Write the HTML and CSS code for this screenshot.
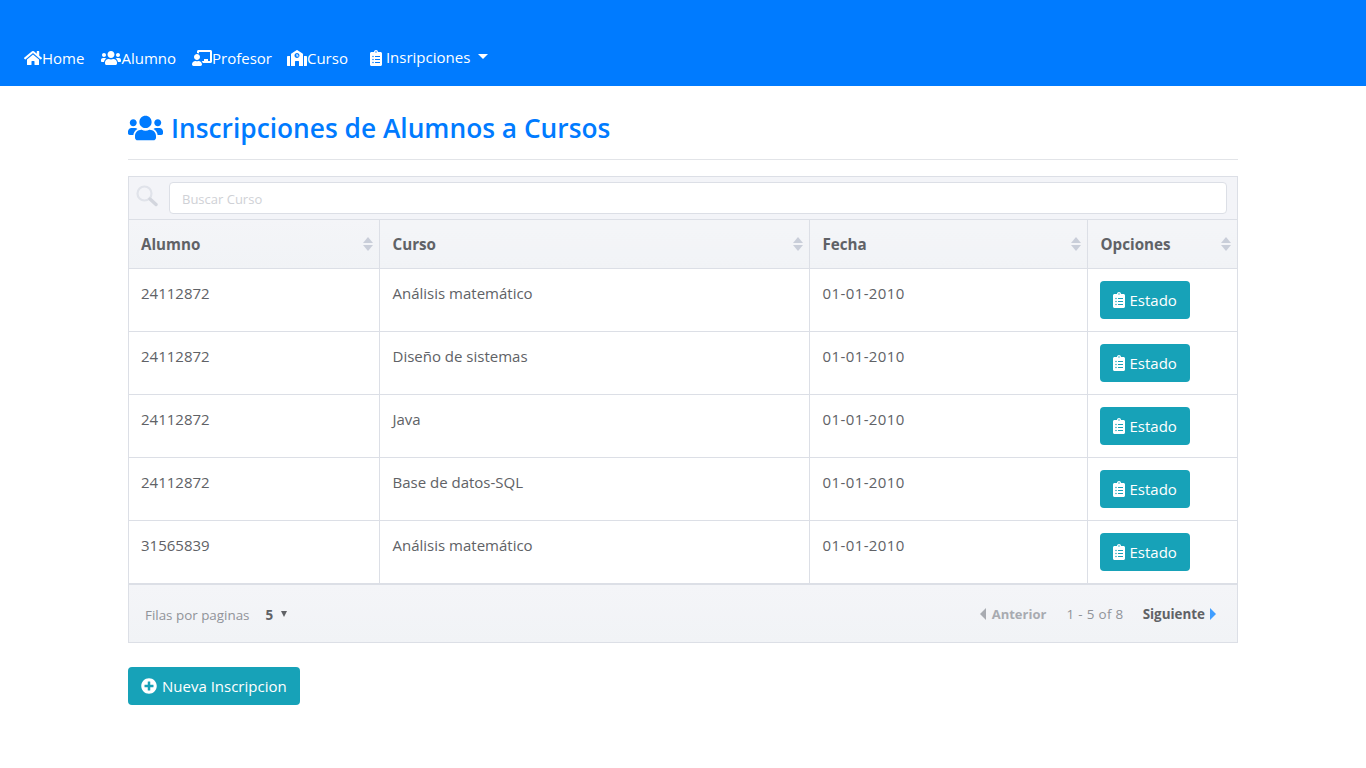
FILE: index.html
```html
<!DOCTYPE html>
<html lang="es">
<head>
<meta charset="utf-8">
<title>Inscripciones</title>
<link rel="stylesheet" href="styles.css">
</head>
<body>
<svg class="defs" aria-hidden="true">
<symbol id="i-home" viewBox="0 0 576 512"><path d="M280.37 148.26L96 300.11V464a16 16 0 0 0 16 16l112.06-.29a16 16 0 0 0 15.92-16V368a16 16 0 0 1 16-16h64a16 16 0 0 1 16 16v95.64a16 16 0 0 0 16 16.05L464 480a16 16 0 0 0 16-16V300L295.67 148.26a12.19 12.19 0 0 0-15.3 0zM571.6 251.47L488 182.56V44.05a12 12 0 0 0-12-12h-56a12 12 0 0 0-12 12v72.61L318.47 43a48 48 0 0 0-61 0L4.34 251.47a12 12 0 0 0-1.6 16.9l25.5 31A12 12 0 0 0 45.15 301l235.22-193.74a12.19 12.19 0 0 1 15.3 0L530.9 301a12 12 0 0 0 16.9-1.6l25.5-31a12 12 0 0 0-1.7-16.93z"/></symbol>
<symbol id="i-users" viewBox="0 0 640 512"><path d="M96 224c35.3 0 64-28.7 64-64s-28.7-64-64-64-64 28.7-64 64 28.7 64 64 64zm448 0c35.3 0 64-28.7 64-64s-28.7-64-64-64-64 28.7-64 64 28.7 64 64 64zm32 32h-64c-17.6 0-33.5 7.1-45.1 18.6 40.3 22.1 68.9 62 75.1 109.4h66c17.7 0 32-14.3 32-32v-32c0-35.3-28.7-64-64-64zm-256 0c61.9 0 112-50.1 112-112S381.9 32 320 32 208 82.1 208 144s50.1 112 112 112zm76.8 32h-8.3c-20.8 10-43.9 16-68.5 16s-47.6-6-68.5-16h-8.3C179.6 288 128 339.6 128 403.2V432c0 26.5 21.5 48 48 48h288c26.5 0 48-21.5 48-48v-28.8c0-63.6-51.6-115.2-115.2-115.2zm-223.7-13.4C161.5 263.1 145.6 256 128 256H64c-35.3 0-64 28.7-64 64v32c0 17.7 14.3 32 32 32h65.9c6.3-47.4 34.9-87.3 75.2-109.4z"/></symbol>
<symbol id="i-teacher" viewBox="0 0 640 512"><path d="M208 352c-2.39 0-4.78.35-7.06 1.09C187.98 357.3 174.35 360 160 360c-14.35 0-27.98-2.7-40.95-6.91-2.28-.74-4.66-1.09-7.05-1.09C49.94 352-.33 402.48 0 464.62.14 490.88 21.73 512 48 512h224c26.27 0 47.86-21.12 48-47.38.33-62.14-49.94-112.62-112-112.62zm-48-32c53.02 0 96-42.98 96-96s-42.98-96-96-96-96 42.98-96 96 42.98 96 96 96zM592 0H208c-26.47 0-48 22.25-48 49.59V96c23.42 0 45.1 6.78 64 17.8V64h352v288h-64v-64H384v64h-76.24c19.1 16.69 33.12 38.73 39.69 64H592c26.47 0 48-22.25 48-49.59V49.59C640 22.25 618.47 0 592 0z"/></symbol>
<symbol id="i-school" viewBox="0 0 640 512"><path d="M0 224v272c0 8.84 7.16 16 16 16h80V192H32c-17.67 0-32 14.33-32 32zm360-48h-24v-40c0-4.42-3.58-8-8-8h-16c-4.42 0-8 3.58-8 8v64c0 4.42 3.58 8 8 8h48c4.42 0 8-3.58 8-8v-16c0-4.42-3.58-8-8-8zm137.75-63.96l-160-106.67a32.02 32.02 0 0 0-35.5 0l-160 106.67A32.002 32.002 0 0 0 128 138.66V512h128V368c0-8.84 7.16-16 16-16h96c8.84 0 16 7.16 16 16v144h128V138.67c0-10.7-5.35-20.7-14.25-26.63zM320 256c-44.18 0-80-35.82-80-80s35.82-80 80-80 80 35.82 80 80-35.82 80-80 80zm288-64h-64v320h80c8.84 0 16-7.16 16-16V224c0-17.67-14.33-32-32-32z"/></symbol>
<symbol id="i-clip" viewBox="0 0 384 512"><path d="M336 64h-80c0-35.3-28.7-64-64-64s-64 28.7-64 64H48C21.5 64 0 85.5 0 112v352c0 26.5 21.5 48 48 48h288c26.5 0 48-21.5 48-48V112c0-26.5-21.5-48-48-48zM96 424c-13.3 0-24-10.7-24-24s10.7-24 24-24 24 10.7 24 24-10.7 24-24 24zm0-96c-13.3 0-24-10.7-24-24s10.7-24 24-24 24 10.7 24 24-10.7 24-24 24zm0-96c-13.3 0-24-10.7-24-24s10.7-24 24-24 24 10.7 24 24-10.7 24-24 24zm96-192c13.3 0 24 10.7 24 24s-10.7 24-24 24-24-10.7-24-24 10.7-24 24-24zm128 368c0 4.4-3.6 8-8 8H168c-4.4 0-8-3.6-8-8v-16c0-4.4 3.6-8 8-8h144c4.4 0 8 3.6 8 8v16zm0-96c0 4.4-3.6 8-8 8H168c-4.4 0-8-3.6-8-8v-16c0-4.4 3.6-8 8-8h144c4.4 0 8 3.6 8 8v16zm0-96c0 4.4-3.6 8-8 8H168c-4.4 0-8-3.6-8-8v-16c0-4.4 3.6-8 8-8h144c4.4 0 8 3.6 8 8v16z"/></symbol>
<symbol id="i-plus" viewBox="0 0 512 512"><path d="M256 8C119 8 8 119 8 256s111 248 248 248 248-111 248-248S393 8 256 8zm144 276c0 6.6-5.4 12-12 12h-92v92c0 6.6-5.4 12-12 12h-56c-6.6 0-12-5.4-12-12v-92h-92c-6.6 0-12-5.4-12-12v-56c0-6.6 5.4-12 12-12h92v-92c0-6.6 5.4-12 12-12h56c6.6 0 12 5.4 12 12v92h92c6.6 0 12 5.4 12 12v56z"/></symbol>
</svg>

<nav class="navbar">
  <a class="nav-link" href="#"><svg class="ico ico-home"><use href="#i-home"/></svg>Home</a>
  <a class="nav-link" href="#"><svg class="ico ico-wide"><use href="#i-users"/></svg>Alumno</a>
  <a class="nav-link" href="#"><svg class="ico ico-wide"><use href="#i-teacher"/></svg>Profesor</a>
  <a class="nav-link" href="#"><svg class="ico ico-wide"><use href="#i-school"/></svg>Curso</a>
  <a class="nav-link nav-drop" href="#"><svg class="ico ico-clip"><use href="#i-clip"/></svg><span class="drop-label">Insripciones</span><span class="caret"></span></a>
</nav>

<main class="container">
  <h3 class="title"><svg class="title-ico"><use href="#i-users"/></svg>Inscripciones de Alumnos a Cursos</h3>
  <hr class="rule">

  <div class="vgt">
    <div class="search">
      <svg class="search-ico" viewBox="0 0 22 22"><circle cx="8.5" cy="8.5" r="7" fill="none" stroke="#e0e3ea" stroke-width="2.2"/><path d="M14 14l6 5.5" fill="none" stroke="#d3d6de" stroke-width="3.4" stroke-linecap="round"/></svg>
      <input class="search-input" type="text" placeholder="Buscar Curso">
    </div>
    <table class="grid">
      <colgroup><col class="c1"><col class="c2"><col class="c3"><col class="c4"></colgroup>
      <thead>
        <tr>
          <th>Alumno<span class="sort"></span></th>
          <th>Curso<span class="sort"></span></th>
          <th>Fecha<span class="sort"></span></th>
          <th>Opciones<span class="sort"></span></th>
        </tr>
      </thead>
      <tbody>
        <tr><td>24112872</td><td>Análisis matemático</td><td class="date">01-01-2010</td><td class="opts"><button class="btn btn-estado"><svg class="btn-clip"><use href="#i-clip"/></svg>Estado</button></td></tr>
        <tr><td>24112872</td><td>Diseño de sistemas</td><td class="date">01-01-2010</td><td class="opts"><button class="btn btn-estado"><svg class="btn-clip"><use href="#i-clip"/></svg>Estado</button></td></tr>
        <tr><td>24112872</td><td>Java</td><td class="date">01-01-2010</td><td class="opts"><button class="btn btn-estado"><svg class="btn-clip"><use href="#i-clip"/></svg>Estado</button></td></tr>
        <tr><td>24112872</td><td>Base de datos-SQL</td><td class="date">01-01-2010</td><td class="opts"><button class="btn btn-estado"><svg class="btn-clip"><use href="#i-clip"/></svg>Estado</button></td></tr>
        <tr><td>31565839</td><td>Análisis matemático</td><td class="date">01-01-2010</td><td class="opts"><button class="btn btn-estado"><svg class="btn-clip"><use href="#i-clip"/></svg>Estado</button></td></tr>
      </tbody>
    </table>
    <div class="foot">
      <div class="foot-left"><span class="per">Filas por paginas</span><span class="per-val">5</span><span class="per-caret"></span></div>
      <div class="foot-right">
        <span class="prev"><span class="arrow-l"></span>Anterior</span>
        <span class="info">1 - 5 of 8</span>
        <span class="next">Siguiente<span class="arrow-r"></span></span>
      </div>
    </div>
  </div>

  <button class="btn btn-new"><svg class="btn-plus"><use href="#i-plus"/></svg>Nueva Inscripcion</button>
</main>
</body>
</html>
```

FILE: styles.css
```css
* { box-sizing: border-box; }
html, body { margin: 0; padding: 0; }
body {
  font-family: "Open Sans", "Noto Sans", sans-serif;
  font-size: 15px;
  color: #606266;
  background: #fff;
}
.defs { display: none; }

/* navbar */
.navbar {
  display: flex;
  align-items: center;
  height: 86px;
  padding: 30px 16px 0;
  background: #007bff;
}
.nav-link {
  display: flex;
  align-items: center;
  height: 40px;
  padding: 0 8px;
  color: #fff;
  text-decoration: none;
}
.nav-link:first-child { padding-right: 9px; }
.nav-link:nth-child(3) { padding-right: 7px; }
.ico { fill: #fff; display: block; flex: none; }
.ico-home { width: 18px; height: 16px; }
.ico-wide { width: 20px; height: 16px; }
.ico-clip { width: 12px; height: 16px; }
.nav-drop { margin-left: 6px; }
.drop-label { margin-left: 4px; position: relative; top: -1px; }
.caret {
  margin-left: 8px;
  margin-top: -3px;
  border-top: 5px solid #fff;
  border-left: 5px solid transparent;
  border-right: 5px solid transparent;
}

/* container */
.container { width: 1110px; margin: 0 auto; }
.title {
  display: flex;
  align-items: center;
  margin: 0;
  padding-top: 10px;
  height: 73px;
  font-size: 26.3px;
  font-weight: 600;
  line-height: 40px;
  color: #007bff;
}
.title-ico { width: 35px; height: 28px; margin-right: 8px; fill: #007bff; flex: none; }
.rule { margin: 0 0 16px; border: 0; border-top: 1px solid #e2e4e8; }

/* table */
.vgt { border: 1px solid #dcdfe6; width: 1110px; }
.search {
  display: flex;
  align-items: flex-start;
  height: 43px;
  padding: 5px 10px 0 7px;
  background: #f3f4f8;
  border-bottom: 1px solid #dcdfe6;
}
.search-ico { width: 22px; height: 22px; margin: 3px 11px 0 0; flex: none; }
.search-input {
  flex: 1;
  height: 32px;
  padding: 2px 12px 0;
  border: 1px solid #dcdfe6;
  border-radius: 4px;
  background: #fff;
  font: 13px "Open Sans", sans-serif;
  color: #606266;
  outline: none;
}
.search-input::placeholder { color: #cfd1d6; opacity: 1; }

.grid { width: 1108px; table-layout: fixed; border-collapse: collapse; }
.c1 { width: 250px; }
.c2 { width: 430px; }
.c3 { width: 278px; }
.c4 { width: 150px; }
.grid th {
  position: relative;
  height: 48px;
  padding: 0 12px;
  text-align: left;
  font-size: 15.2px;
  font-weight: 700;
  color: #606266;
  background: linear-gradient(#f4f5f8, #f1f3f6);
  border-right: 1px solid #dcdfe6;
  border-bottom: 1px solid #dcdfe6;
}
.grid th + th { padding-left: 13px; }
.grid th:last-child, .grid td:last-child { border-right: 0; }
.sort {
  position: absolute;
  right: 6px;
  top: 17px;
  width: 10px;
  height: 14px;
}
.sort::before, .sort::after {
  content: "";
  position: absolute;
  left: 0;
  border-left: 5px solid transparent;
  border-right: 5px solid transparent;
}
.sort::before { top: 0; border-bottom: 6px solid #c9ced9; }
.sort::after { bottom: 0; border-top: 6px solid #c9ced9; }
.grid td {
  height: 63px;
  padding: 12px;
  vertical-align: top;
  line-height: 24px;
  border-right: 1px solid #dcdfe6;
  border-bottom: 1px solid #dcdfe6;
}
.grid td + td { padding-left: 13px; }
.grid td.opts { padding-left: 12px; }
.grid .date { letter-spacing: 0.4px; }

/* buttons */
.btn {
  display: flex;
  align-items: center;
  height: 38px;
  border: 0;
  border-radius: 4px;
  background: #17a2b8;
  color: #fff;
  font: 15px "Open Sans", sans-serif;
  padding: 0 13px;
}
.btn-estado { width: 90px; }
.btn-clip { width: 12px; height: 16px; margin-right: 5px; fill: #fff; flex: none; }
.btn-new { width: 172px; margin-top: 24px; }
.btn-plus { width: 16px; height: 16px; margin-right: 5px; fill: #fff; flex: none; }

/* footer */
.foot {
  display: flex;
  justify-content: space-between;
  align-items: center;
  height: 58px;
  padding: 0 21px 0 16px;
  background: linear-gradient(#f4f5f8, #f1f3f6);
  border-top: 1px solid #dcdfe6;
  font-size: 13.4px;
  color: #909399;
}
.foot-left { display: flex; align-items: center; padding-top: 3px; }
.per-val { margin-left: 16px; font-weight: 700; color: #606266; }
.per-caret {
  margin: -2px 0 0 8px;
  border-top: 6px solid #606266;
  border-left: 3px solid transparent;
  border-right: 3px solid transparent;
}
.foot-right { display: flex; align-items: center; padding-top: 1px; }
.prev { display: flex; align-items: center; font-size: 13px; font-weight: 700; color: #a8abb1; }
.arrow-l {
  margin-right: 6px;
  border-right: 6px solid #a8abb1;
  border-top: 6px solid transparent;
  border-bottom: 6px solid transparent;
}
.info { margin: 0 19px 0 20px; letter-spacing: 0.35px; }
.next { display: flex; align-items: center; font-weight: 700; color: #606266; }
.arrow-r {
  margin-left: 5px;
  border-left: 6px solid #409eff;
  border-top: 6px solid transparent;
  border-bottom: 6px solid transparent;
}
```
